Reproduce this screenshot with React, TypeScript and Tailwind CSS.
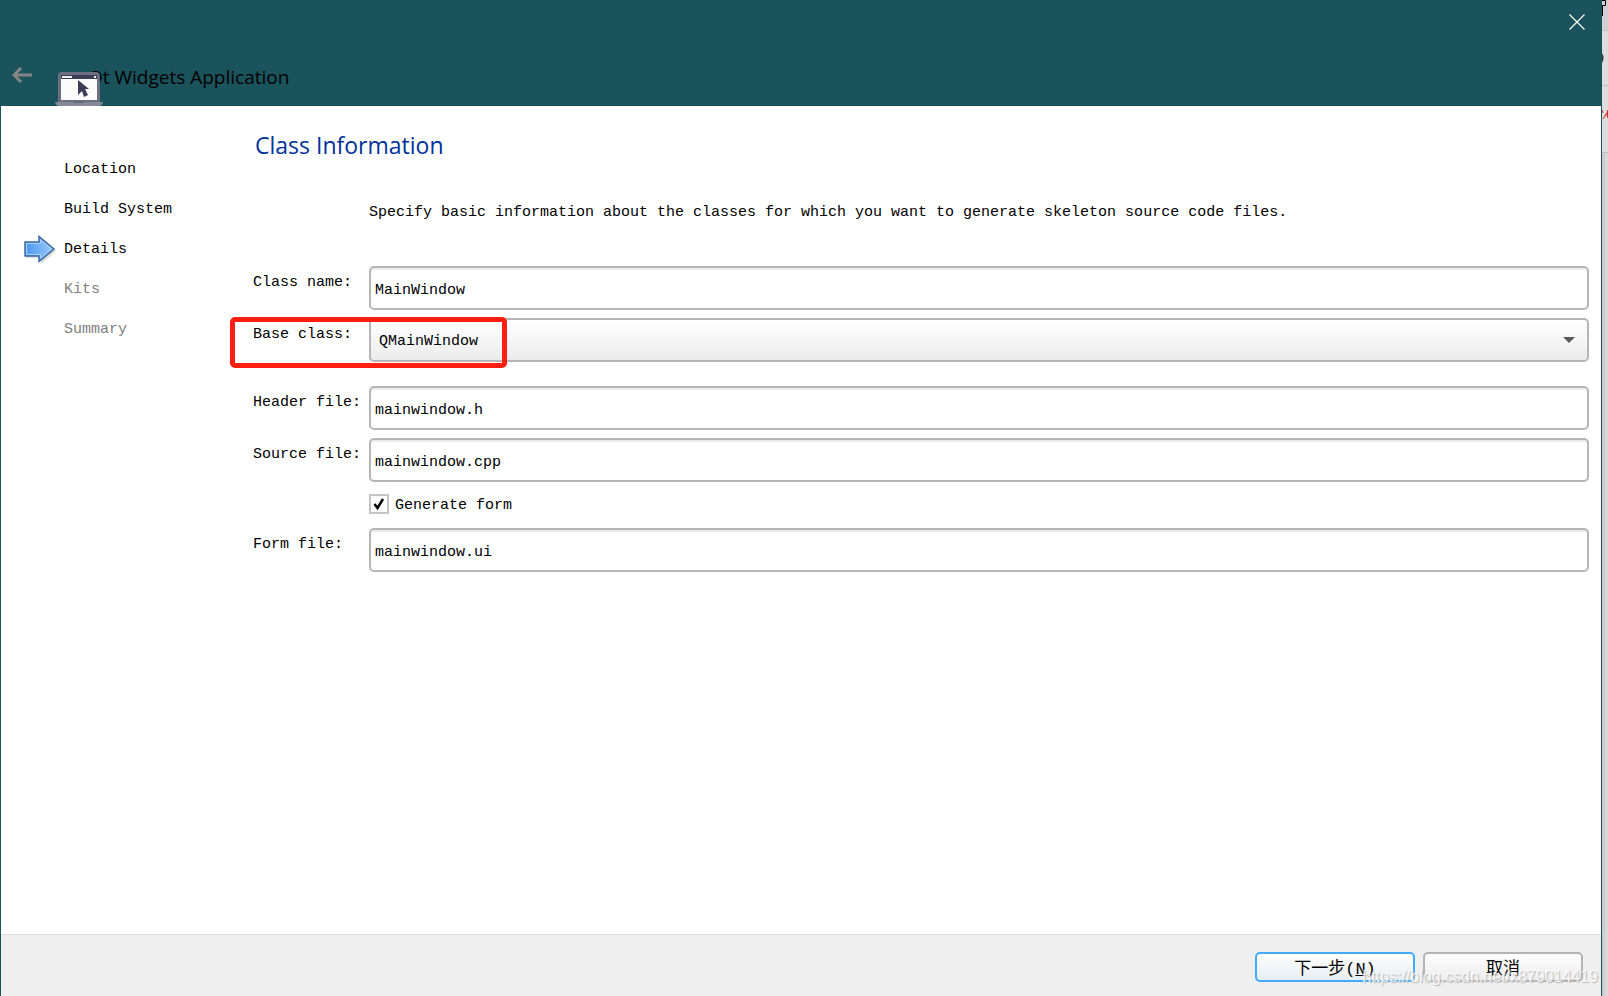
import type { ReactNode } from 'react';

const steps = [
  { name: 'Location', state: 'done' },
  { name: 'Build System', state: 'done' },
  { name: 'Details', state: 'current' },
  { name: 'Kits', state: 'pending' },
  { name: 'Summary', state: 'pending' },
];

const fieldClass =
  'block w-full h-11 border-2 border-[#b6b6b6] rounded-[5px] text-black outline-none pt-1';

const buttonClass =
  'w-40 h-[30px] border-2 rounded-[5px] bg-linear-to-b from-white text-[17px] leading-6 pt-1';

function BackIcon() {
  return (
    <svg className="w-5 h-4" viewBox="0 0 20 16" fill="none" stroke="#858585" strokeWidth="3">
      <path d="M20 8H2M9 1L2 8l7 7" />
    </svg>
  );
}

function CloseIcon() {
  return (
    <svg className="w-4 h-4" viewBox="0 0 16 16" stroke="#fff" strokeWidth="1.2">
      <path d="M.5.5l15 15M15.5.5l-15 15" />
    </svg>
  );
}

function LaptopIcon() {
  return (
    <svg className="w-12 h-[34px]" viewBox="0 0 48 34">
      <path d="M3 31V4q0-4 4-4h34q4 0 4 4v27z" fill="#6b6f80" />
      <path d="M6 3h36v25H6z" fill="#fcfcfd" />
      <path d="M6 3h36v4H6z" fill="#3a3d55" />
      <path d="M7 4h10v2H7zM39 4h2v2h-2z" fill="#eceef2" />
      <path d="M23 8l11 9h-4l3 6-4 2-2-6-4 4z" fill="#3a3d55" />
      <path d="M0 30h48q-1 4-4 4H4q-3 0-4-4z" fill="#858997" />
      <path d="M18 30h12l-2 1h-8z" fill="#5b5f73" />
    </svg>
  );
}

function CurrentStepIcon() {
  return (
    <svg className="w-8 h-[30px]" viewBox="0 0 32 30">
      <defs>
        <linearGradient id="arrow" x1="0" y1="0" x2="1" y2="0">
          <stop offset="0" stopColor="#4b97f2" />
          <stop offset="1" stopColor="#9ccbfb" />
        </linearGradient>
      </defs>
      <path d="M2 9h15V3l15 13-15 13v-6H2z" fill="#000" opacity=".14" />
      <path
        d="M1 7h14V1.500l15 12.500-15 12.500V21H1z"
        fill="url(#arrow)"
        stroke="#3c6ca3"
        strokeWidth="1.500"
      />
      <path d="M2.500 8.500h14V5l11 9-11 9v-3.500h-14z" fill="none" stroke="#a8d0fb" />
    </svg>
  );
}

interface FormRowProps {
  label?: string;
  htmlFor?: string;
  children: ReactNode;
}

function FormRow({ label, htmlFor, children }: FormRowProps) {
  return (
    <div className="flex items-start">
      <div className="w-[116px] shrink-0 pt-[5px]">
        {label && <label htmlFor={htmlFor}>{label}</label>}
      </div>
      <div className="flex-1 min-w-0">{children}</div>
    </div>
  );
}

interface TextFieldProps {
  id: string;
  value: string;
}

function TextField({ id, value }: TextFieldProps) {
  return (
    <input
      id={id}
      type="text"
      defaultValue={value}
      className={`${fieldClass} bg-white px-1 shadow-[inset_0_2px_0_#ebebeb]`}
    />
  );
}

export default function App() {
  return (
    <div className="relative flex min-h-screen bg-[#dcdcdc] font-['Liberation_Mono','Noto_Sans_CJK_SC',monospace] text-[15px] leading-6 text-black">
      <div className="flex-1 min-w-0 flex flex-col border-x border-[#1b535c] bg-white">
        <header className="h-[106px] bg-[#1b535c] flex flex-col justify-between">
          <div className="flex justify-end pt-3.5 pr-4">
            <button type="button" aria-label="Close" className="block">
              <CloseIcon />
            </button>
          </div>
          <div className="flex items-end">
            <button type="button" aria-label="Back" className="ml-[11px] mb-[23px]">
              <BackIcon />
            </button>
            <div className="relative z-10 ml-[23px]">
              <LaptopIcon />
            </div>
            <h1 className="-ml-[15px] mb-[17px] font-['Open_Sans','Noto_Sans',sans-serif] text-[19px] leading-6">
              Qt Widgets Application
            </h1>
          </div>
        </header>

        <div className="flex-1 flex">
          <nav className="w-[252px] shrink-0 pt-11">
            <ol>
              {steps.map((step) => (
                <li key={step.name} className="flex items-center h-10">
                  <span className="w-[63px] shrink-0 pl-[23px]">
                    {step.state === 'current' && <CurrentStepIcon />}
                  </span>
                  <span className={step.state === 'pending' ? 'text-[#808080]' : 'text-black'}>
                    {step.name}
                  </span>
                </li>
              ))}
            </ol>
          </nav>

          <main className="flex-1 min-w-0 pt-[23px] pr-3">
            <h2 className="pl-0.5 font-['Open_Sans','Noto_Sans',sans-serif] text-[23px] leading-8 text-[#003399]">
              Class Information
            </h2>
            <p className="mt-10 pl-[116px]">
              Specify basic information about the classes for which you want to generate skeleton
              source code files.
            </p>

            <form className="mt-[41px] flex flex-col gap-2">
              <FormRow label="Class name:" htmlFor="class-name">
                <TextField id="class-name" value="MainWindow" />
              </FormRow>

              <div className="relative mb-4">
                <FormRow label="Base class:" htmlFor="base-class">
                  <div className="relative">
                    <select
                      id="base-class"
                      className={`${fieldClass} appearance-none bg-linear-to-b from-white to-[#ececec] px-2`}
                    >
                      <option>QMainWindow</option>
                      <option>QWidget</option>
                      <option>QDialog</option>
                    </select>
                    <svg
                      className="absolute right-3.5 top-[19px] w-3 h-1.5 pointer-events-none"
                      viewBox="0 0 12 6"
                    >
                      <path d="M0 0h12L6 6z" fill="#5a5a5a" />
                    </svg>
                  </div>
                </FormRow>
                <div className="absolute -left-[23px] -top-px w-[277px] h-[51px] border-[5px] border-[#ff1e12] rounded-[5px] pointer-events-none" />
              </div>

              <FormRow label="Header file:" htmlFor="header-file">
                <TextField id="header-file" value="mainwindow.h" />
              </FormRow>
              <FormRow label="Source file:" htmlFor="source-file">
                <TextField id="source-file" value="mainwindow.cpp" />
              </FormRow>
              <FormRow>
                <div className="flex items-start h-[30px] pt-1">
                  <span className="relative w-5 h-5">
                    <input
                      id="generate-form"
                      type="checkbox"
                      defaultChecked
                      className="peer block w-5 h-5 appearance-none border-2 border-[#c4c4c4] bg-white"
                    />
                    <svg
                      className="absolute left-1 top-1 w-3 h-3 pointer-events-none invisible peer-checked:visible"
                      viewBox="0 0 12 12"
                      fill="none"
                      stroke="#000"
                      strokeWidth="2.500"
                    >
                      <path d="M1.500 6L4.500 10L10 1" />
                    </svg>
                  </span>
                  <label htmlFor="generate-form" className="pl-1.5">
                    Generate form
                  </label>
                </div>
              </FormRow>
              <FormRow label="Form file:" htmlFor="form-file">
                <TextField id="form-file" value="mainwindow.ui" />
              </FormRow>
            </form>
          </main>
        </div>

        <footer className="h-[62px] border-t border-[#dfdfdf] bg-[#efefef] flex justify-end gap-2 pt-[17px] pr-[18px]">
          <button type="button" className={`${buttonClass} border-[#42aaff] to-[#e6edf3]`}>
            下一步(<span className="underline">N</span>)
          </button>
          <button type="button" className={`${buttonClass} border-[#b4b4b4] to-[#ececec]`}>
            取消
          </button>
        </footer>
      </div>

      <div className="w-1.5 shrink-0 bg-linear-to-r from-[#c8c8c8] to-[#dedede]">
        <svg className="block w-1.5 h-40" viewBox="0 0 6 160">
          <path d="M0 0h6v30H0z" fill="#d0d0d2" />
          <path d="M0 31h6v121H0z" fill="#dedede" />
          <path d="M0 30h6v1H0zM0 85h6v1H0zM0 152h6v1H0z" fill="#c2c2c2" />
          <path d="M0 .5h3.500v5H0M.5 6v10" fill="none" stroke="#000" />
          <path d="M0 53q3 5 0 10z" fill="#333" />
          <path d="M0 110l1 3M1 119l5-8M5.500 110v8M3 115h3" fill="none" stroke="#cc3333" />
        </svg>
      </div>

      <div className="absolute right-2.5 bottom-[7px] font-['Liberation_Sans',sans-serif] text-base text-white/80 [text-shadow:1px_1px_1px_#b4b4b4] pointer-events-none">
        https://blog.csdn.net/x879014419
      </div>
    </div>
  );
}
